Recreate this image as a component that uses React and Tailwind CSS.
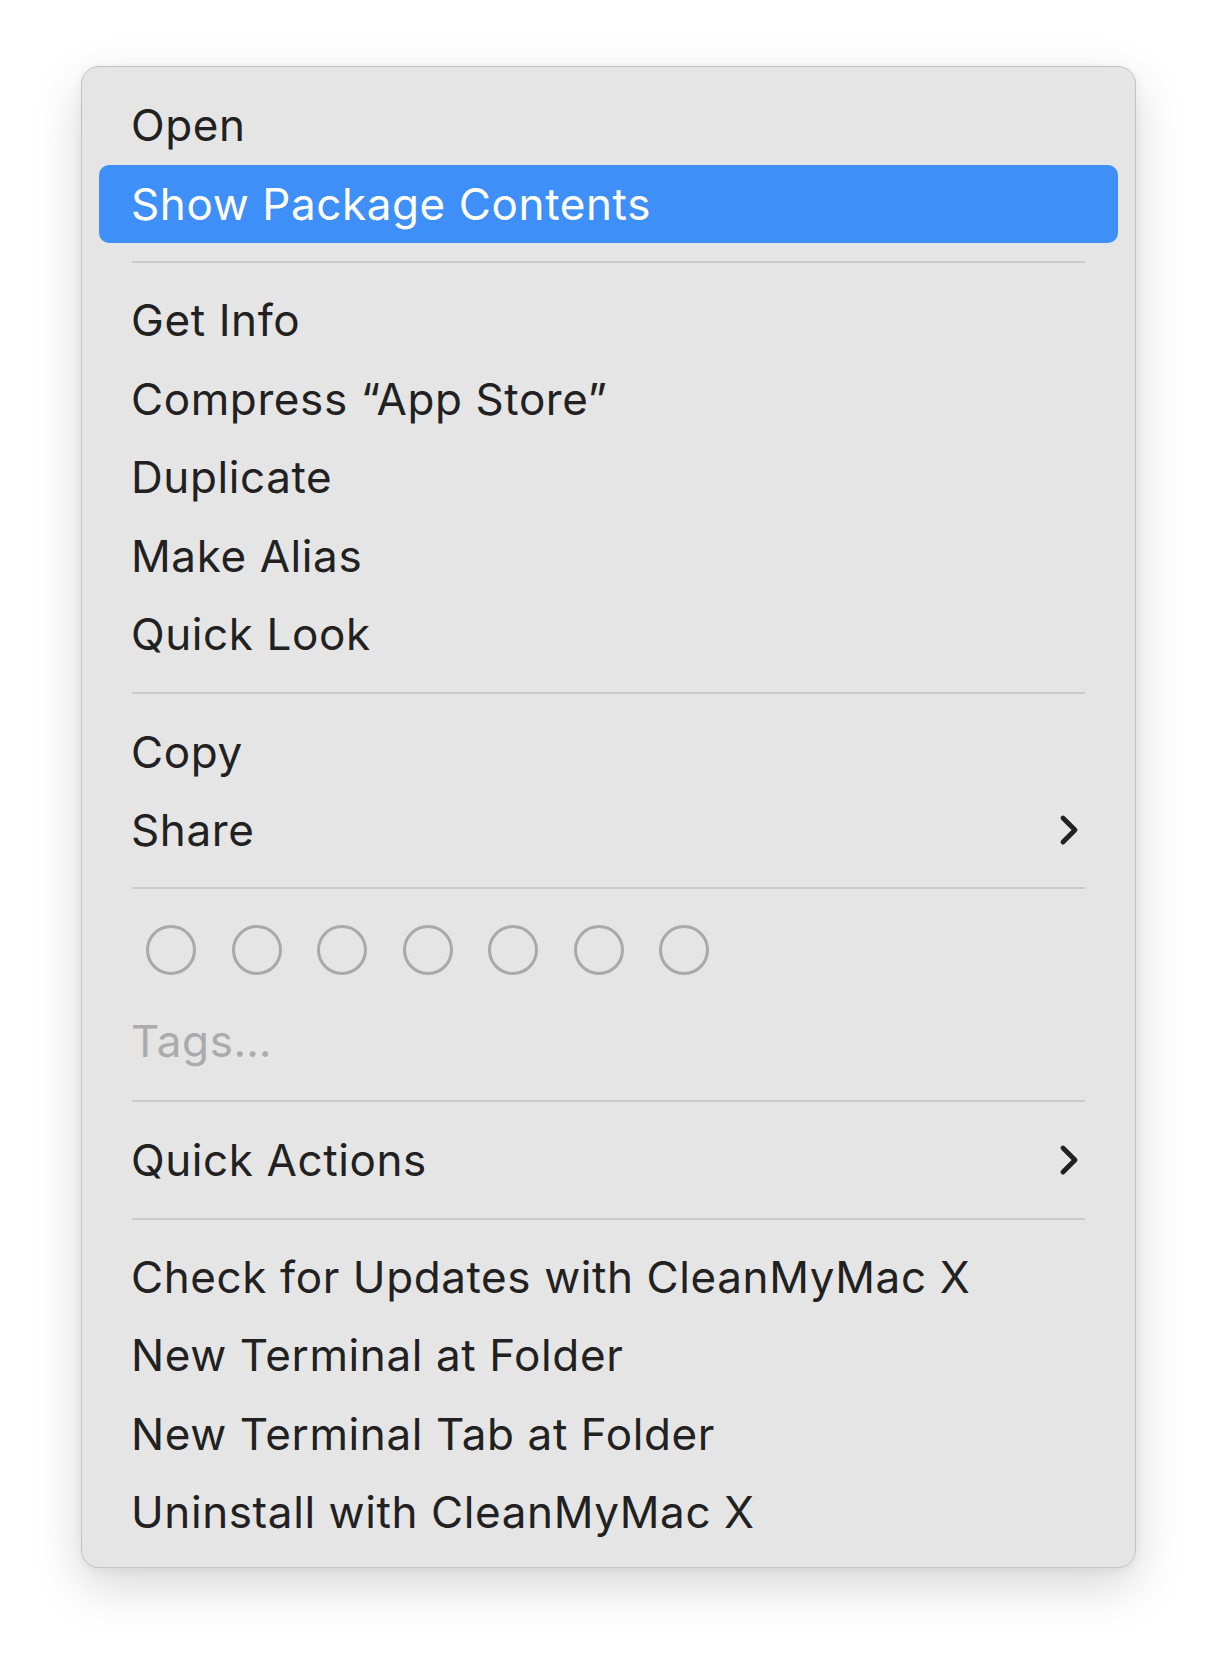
const groups = [
  [
    { label: "Open" },
    { label: "Show Package Contents", active: true },
  ],
  [
    { label: "Get Info" },
    { label: "Compress “App Store”" },
    { label: "Duplicate" },
    { label: "Make Alias" },
    { label: "Quick Look" },
  ],
  [
    { label: "Copy" },
    { label: "Share", submenu: true },
  ],
];

const tail = [
  { label: "Check for Updates with CleanMyMac X" },
  { label: "New Terminal at Folder" },
  { label: "New Terminal Tab at Folder" },
  { label: "Uninstall with CleanMyMac X" },
];

function Chevron() {
  return (
    <svg width="22" height="34" viewBox="0 0 22 34" className="text-[#222]">
      <path
        d="M5 5 L17 17 L5 29"
        fill="none"
        stroke="currentColor"
        strokeWidth="4.8"
        strokeLinecap="round"
        strokeLinejoin="round"
      />
    </svg>
  );
}

function Item({ label, active, submenu, muted }) {
  return (
    <div
      className={`flex h-[78.5px] items-center justify-between rounded-[10px] pl-[32px] pr-[38px] ${
        active ? "bg-[#3e8ff7] text-white" : muted ? "text-[#ababab]" : "text-[#212121]"
      }`}
    >
      <span>{label}</span>
      {submenu && <Chevron />}
    </div>
  );
}

function Separator({ h = "h-[38px]" }) {
  return (
    <div className={`flex ${h} items-center px-[33px]`}>
      <div className="h-[2px] w-full bg-[#cbcbcb]" />
    </div>
  );
}

export default function App() {
  return (
    <div className="min-h-[1664px] bg-white pl-[81px] pt-[66px]">
      <div
        className="w-[1055px] rounded-[18px] border border-[#c2c2c2] bg-[#e5e5e5] px-[17px] pb-[15.5px] pt-[19px] text-[44px] leading-none tracking-[0.6px] shadow-[0_18px_50px_rgba(0,0,0,0.16),0_2px_8px_rgba(0,0,0,0.06)]"
        style={{ fontFamily: "Inter, 'Noto Sans', sans-serif" }}
      >
        {groups.map((items, gi) => (
          <div key={gi}>
            {gi === 1 && <Separator h="h-[38px]" />}
            {gi === 2 && <Separator h="h-[39px]" />}
            {items.map((it) => (
              <Item key={it.label} {...it} />
            ))}
          </div>
        ))}

        <Separator h="h-[37px]" />
        <div className="flex h-[95px] gap-[35.5px] pl-[47px] pt-[18px]">
          {Array.from({ length: 7 }).map((_, i) => (
            <div key={i} className="h-[50px] w-[50px] rounded-full border-[3px] border-[#a9a9a9]" />
          ))}
        </div>
        <Item label="Tags…" muted />
        <Separator h="h-[41px]" />
        <Item label="Quick Actions" submenu />
        <Separator />
        {tail.map((it) => (
          <Item key={it.label} {...it} />
        ))}
      </div>
    </div>
  );
}
